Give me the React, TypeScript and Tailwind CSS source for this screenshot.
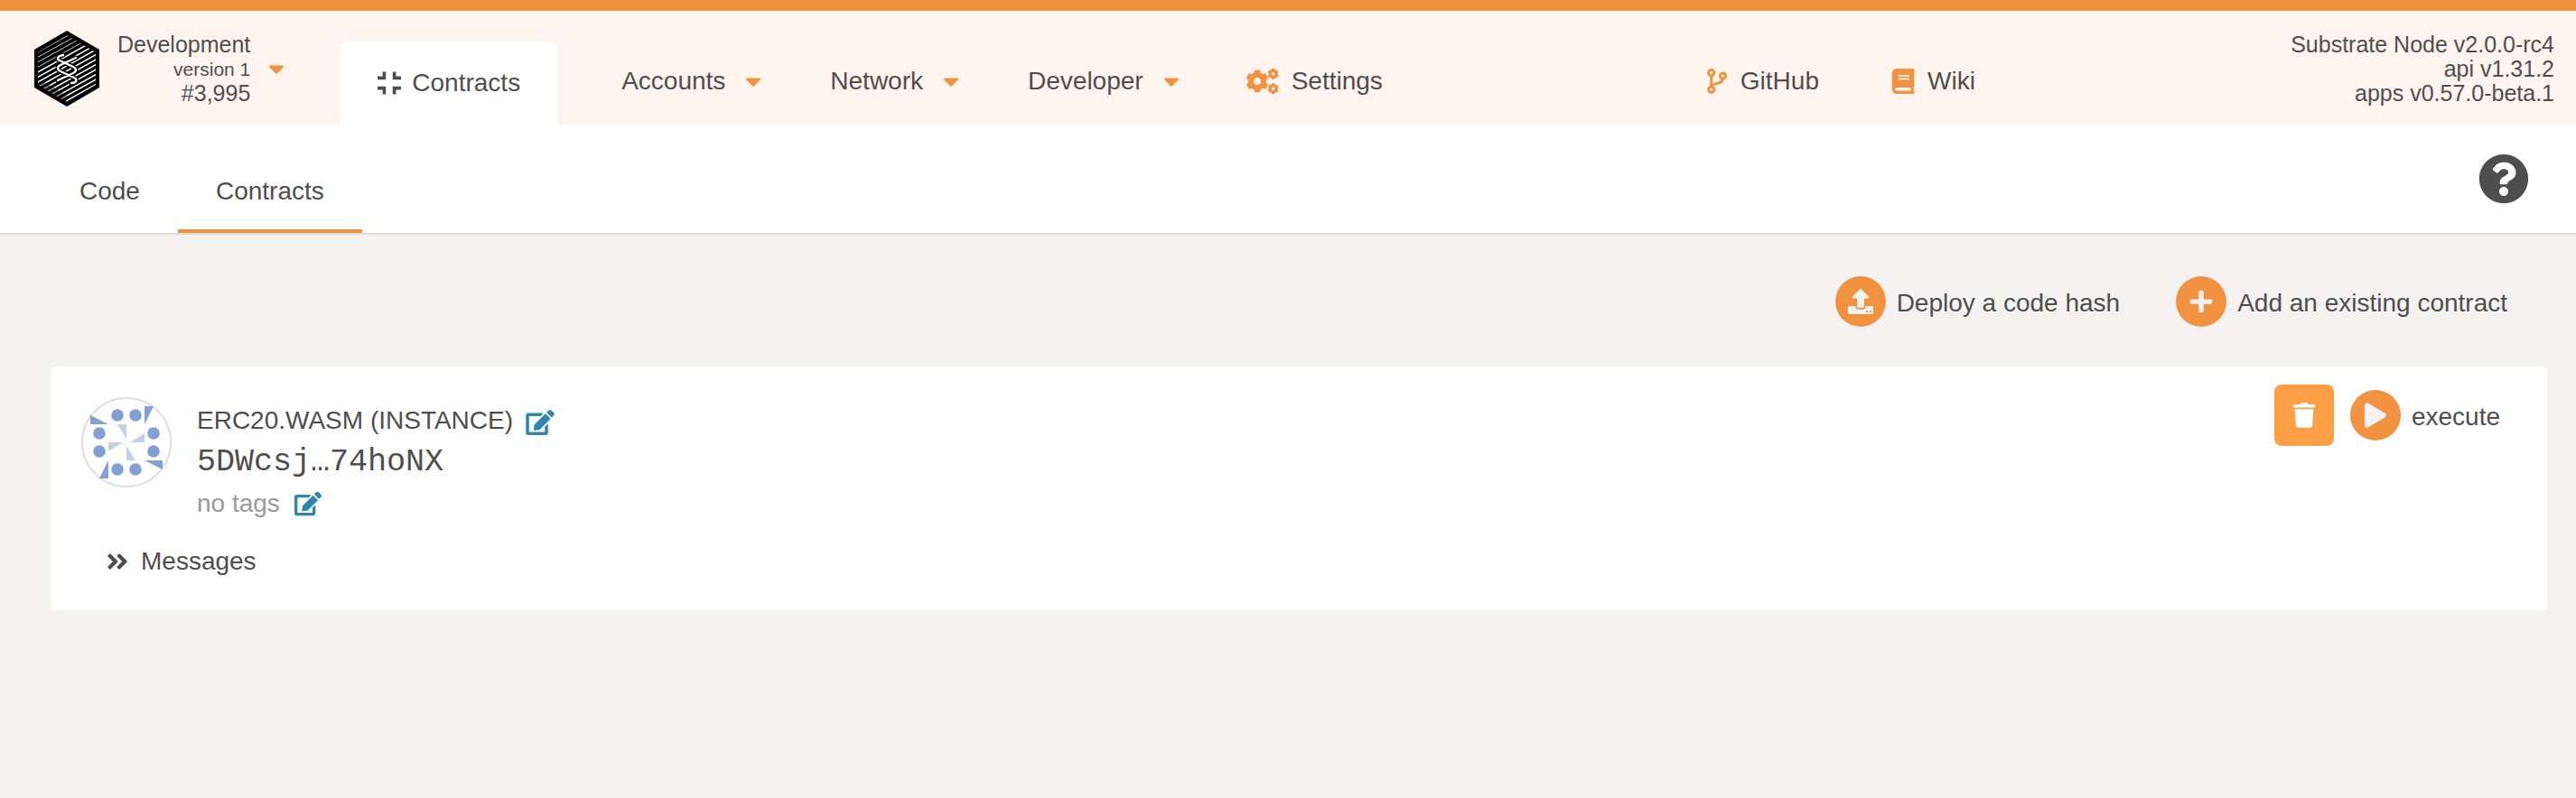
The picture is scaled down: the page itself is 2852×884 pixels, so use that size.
import type { ReactNode } from 'react';
import {
  FaAngleDoubleRight,
  FaBook,
  FaCaretDown,
  FaEdit,
  FaPlay,
  FaPlus,
  FaQuestionCircle,
  FaTrash,
} from 'react-icons/fa';

const LINES = Array.from({ length: 20 }, (_, i) => 6 + i * 5.5);

function Logo() {
  return (
    <svg viewBox="0 0 72 84" className="h-[84px] w-[72px]" aria-hidden="true">
      <defs>
        <clipPath id="hex-inner">
          <path d="M36 5 68 24V60L36 79 4 60V24Z" />
        </clipPath>
      </defs>
      <path d="M36 0 72 21V63L36 84 0 63V21Z" fill="#000" />
      <g clipPath="url(#hex-inner)" stroke="#fff">
        {LINES.map((y, i) => (
          <path key={y} d={`M0 ${y + 9}L72 ${y - 31}`} strokeWidth={i < 6 ? 0.8 : 1.5} />
        ))}
        <path d="M4 62 36 80V72L10 56Z" fill="#000" fillOpacity="0.4" stroke="none" />
      </g>
      <g fill="none" strokeLinecap="round" strokeLinejoin="round">
        <path
          d="M32 27c-6 1-8 4-4 6l15 7c4 2 4 5 0 7l-17 8M46 30l-17 8c-4 2-4 5 0 7l15 7c4 2 3 6-3 6"
          stroke="#000"
          strokeWidth="5"
        />
        <path
          d="M32 27c-6 1-8 4-4 6l15 7c4 2 4 5 0 7l-17 8M46 30l-17 8c-4 2-4 5 0 7l15 7c4 2 3 6-3 6"
          stroke="#fff"
          strokeWidth="2.4"
        />
      </g>
    </svg>
  );
}

function CompressIcon() {
  return (
    <svg viewBox="0 0 26 26" className="h-[26px] w-[26px]" fill="none" stroke="currentColor" strokeWidth="3.6" aria-hidden="true">
      <path d="M0 7.4H7.4V0.5M18.6 0.5V7.4H26M0 18.6H7.4V25.5M26 18.6H18.6V25.5" />
    </svg>
  );
}

type GearProps = { cx: number; cy: number; r: number; hole: number; tooth: number };

function Gear({ cx, cy, r, hole, tooth }: GearProps) {
  return (
    <g transform={`translate(${cx} ${cy})`} stroke="currentColor">
      <circle r={(r * 0.82 + hole) / 2} fill="none" strokeWidth={r * 0.82 - hole} />
      {[0, 60, 120, 180, 240, 300].map((a) => (
        <rect
          key={a}
          x={-tooth / 2}
          y={-r}
          width={tooth}
          height={r * 0.4}
          rx={tooth * 0.15}
          fill="currentColor"
          stroke="none"
          transform={`rotate(${a})`}
        />
      ))}
    </g>
  );
}

function CogsIcon() {
  return (
    <svg viewBox="0 0 36 28" className="h-7 w-9 text-[#f19240]" aria-hidden="true">
      <Gear cx={12} cy={14} r={12.3} hole={3.9} tooth={6.8} />
      <Gear cx={29.6} cy={5.8} r={6} hole={1.8} tooth={3.6} />
      <Gear cx={29.6} cy={22.2} r={6} hole={1.8} tooth={3.6} />
    </svg>
  );
}

function BranchIcon() {
  return (
    <svg viewBox="0 0 24 28" className="h-7 w-6 text-[#f19240]" fill="none" stroke="currentColor" strokeWidth="3" aria-hidden="true">
      <circle cx="5.7" cy="4.7" r="3.1" />
      <circle cx="5.7" cy="23.3" r="3.1" />
      <circle cx="18.5" cy="8" r="3.1" />
      <path d="M5.7 7.5V20.5M18.5 11C18.5 18 8 15 6 19.5" />
    </svg>
  );
}

function UploadIcon() {
  return (
    <svg viewBox="0 0 28 28" className="h-7 w-7" fill="currentColor" aria-hidden="true">
      <path d="M13.1.4a1.3 1.3 0 0 1 1.8 0l8 8.2c.8.8.2 1.9-.8 1.9H17.8V19.5c0 .8-.6 1.4-1.4 1.4h-4.8c-.8 0-1.4-.6-1.4-1.4V10.500H5.900c-1 0-1.600-1.100-.8-1.900Z" />
      <path
        fillRule="evenodd"
        d="M1.300 19H8.400V20c0 1.500 1.200 2.700 2.700 2.700h5.800c1.500 0 2.700-1.200 2.700-2.700V19h7.100c.7 0 1.300.6 1.300 1.300v6.400c0 .7-.6 1.300-1.300 1.300H1.300C.6 28 0 27.400 0 26.700V20.300C0 19.600.6 19 1.300 19ZM20 24.100v2h2v-2ZM23.800 24.100v2h2v-2Z"
      />
    </svg>
  );
}

/* circles of the outer ring, on a 100 unit canvas */
const DOTS = [
  [40, 20], [60, 20], [80, 40], [80, 60], [60, 80], [40, 80], [20, 60], [20, 40],
];

function Identicon() {
  return (
    <svg viewBox="0 0 100 100" className="h-[100px] w-[100px] shrink-0" role="img" aria-label="Contract icon">
      <circle cx="50" cy="50" r="49" fill="#fff" stroke="#ddd" strokeWidth="2" />
      {DOTS.map(([x, y]) => (
        <circle key={`${x}-${y}`} cx={x} cy={y} r="6.8" fill="#839fd4" />
      ))}
      {[0, 90, 180, 270].map((a) => (
        <g key={a} transform={`rotate(${a} 50 50)`}>
          <path d="M10 20V30H30Z" fill="#839fd4" />
          <path d="M40 30H50V46Z" fill="#c3d0ea" />
        </g>
      ))}
    </svg>
  );
}

function Caret() {
  return <FaCaretDown className="h-7 w-[18px] text-[#f19240]" />;
}

function MenuItem({ label }: { label: string }) {
  return (
    <button type="button" className="flex items-center gap-[22px] pr-[34px] pl-[42px]">
      {label}
      <Caret />
    </button>
  );
}

function LinkItem({ icon, label }: { icon: ReactNode; label: string }) {
  return (
    <a href="#" className="flex items-center gap-[14px] px-10">
      {icon}
      {label}
    </a>
  );
}

function ActionButton({ icon, label }: { icon: ReactNode; label: string }) {
  return (
    <button type="button" className="flex items-center gap-3">
      <span className="flex h-14 w-14 items-center justify-center rounded-full bg-[#f19240] text-[#f4f3f1]">
        {icon}
      </span>
      <span className="pt-1">{label}</span>
    </button>
  );
}

export default function App() {
  return (
    <div className="min-h-screen bg-[#f4f3f1] font-['Liberation_Sans',Arial,sans-serif] text-[28px] leading-8 text-[#4e4e4e]">
      <header className="flex h-[138px] border-t-12 border-[#f19240] bg-[#fff5ee] pt-0.5 pr-6 pl-[38px]">
        <button type="button" className="flex items-center text-right text-[25px] leading-[27px]">
          <Logo />
          <span className="ml-5 block">
            <span className="block">Development</span>
            <span className="block text-[21px]">version 1</span>
            <span className="block">#3,995</span>
          </span>
          <span className="ml-5">
            <Caret />
          </span>
        </button>

        <nav className="ml-[61px] flex flex-1">
          <a
            href="#"
            aria-current="page"
            className="mt-8 mr-7 flex items-center gap-3 rounded-t-lg bg-white px-[42px]"
          >
            <CompressIcon />
            Contracts
          </a>
          <div className="flex flex-1 pt-7">
            <MenuItem label="Accounts" />
            <MenuItem label="Network" />
            <MenuItem label="Developer" />
            <LinkItem icon={<CogsIcon />} label="Settings" />
            <div className="ml-[278px] flex">
              <LinkItem icon={<BranchIcon />} label="GitHub" />
              <LinkItem icon={<FaBook className="h-7 w-[26px] text-[#f19240]" />} label="Wiki" />
            </div>
          </div>
        </nav>

        <div className="self-center text-right text-[25px] leading-[27px]">
          <div>Substrate Node v2.0.0-rc4</div>
          <div>api v1.31.2</div>
          <div>apps v0.57.0-beta.1</div>
        </div>
      </header>

      <div className="flex h-[122px] items-stretch border-b-2 border-[#ddd] bg-white pr-[52px] pl-[46px]">
        <a href="#" className="flex items-center border-b-4 border-transparent px-[42px] pt-8">
          Code
        </a>
        <a href="#" aria-current="page" className="flex items-center border-b-4 border-[#f19240] px-[42px] pt-8">
          Contracts
        </a>
        <button type="button" aria-label="Help" className="ml-auto">
          <FaQuestionCircle className="h-14 w-14" />
        </button>
      </div>

      <main className="pt-[46px] pr-8 pl-14">
        <div className="flex justify-end gap-[62px] pr-11">
          <ActionButton icon={<UploadIcon />} label="Deploy a code hash" />
          <ActionButton icon={<FaPlus className="h-7 w-7" />} label="Add an existing contract" />
        </div>

        <article className="mt-11 flex items-start justify-between rounded-md bg-white pt-5 pr-[52px] pb-[38px] pl-[34px]">
          <div>
            <div className="flex gap-7 pt-[14px]">
              <Identicon />
              <div className="pt-[10px]">
                <div className="flex items-center gap-[14px]">
                  ERC20.WASM (INSTANCE)
                  <button type="button" aria-label="Edit name" className="pt-1">
                    <FaEdit className="h-7 w-8 text-[#2e86ab]" />
                  </button>
                </div>
                <div className="mt-[10px] font-['Liberation_Mono',monospace] text-[35px] leading-10">5DWcsj…74hoNX</div>
                <div className="mt-[10px] flex items-center gap-4 text-[#999]">
                  no tags
                  <button type="button" aria-label="Edit tags">
                    <FaEdit className="h-7 w-[30px] text-[#2e86ab]" />
                  </button>
                </div>
              </div>
            </div>
            <button type="button" className="mt-8 ml-7 flex items-center gap-[14px]">
              <FaAngleDoubleRight className="h-7 w-6" />
              Messages
            </button>
          </div>

          <div className="flex items-center gap-[18px]">
            <button
              type="button"
              aria-label="Forget contract"
              className="flex h-[68px] w-[66px] items-center justify-center rounded-lg bg-[#ff9f45] text-white"
            >
              <FaTrash className="h-7 w-6" />
            </button>
            <ActionButton icon={<FaPlay className="h-7 w-6" />} label="execute" />
          </div>
        </article>
      </main>
    </div>
  );
}
